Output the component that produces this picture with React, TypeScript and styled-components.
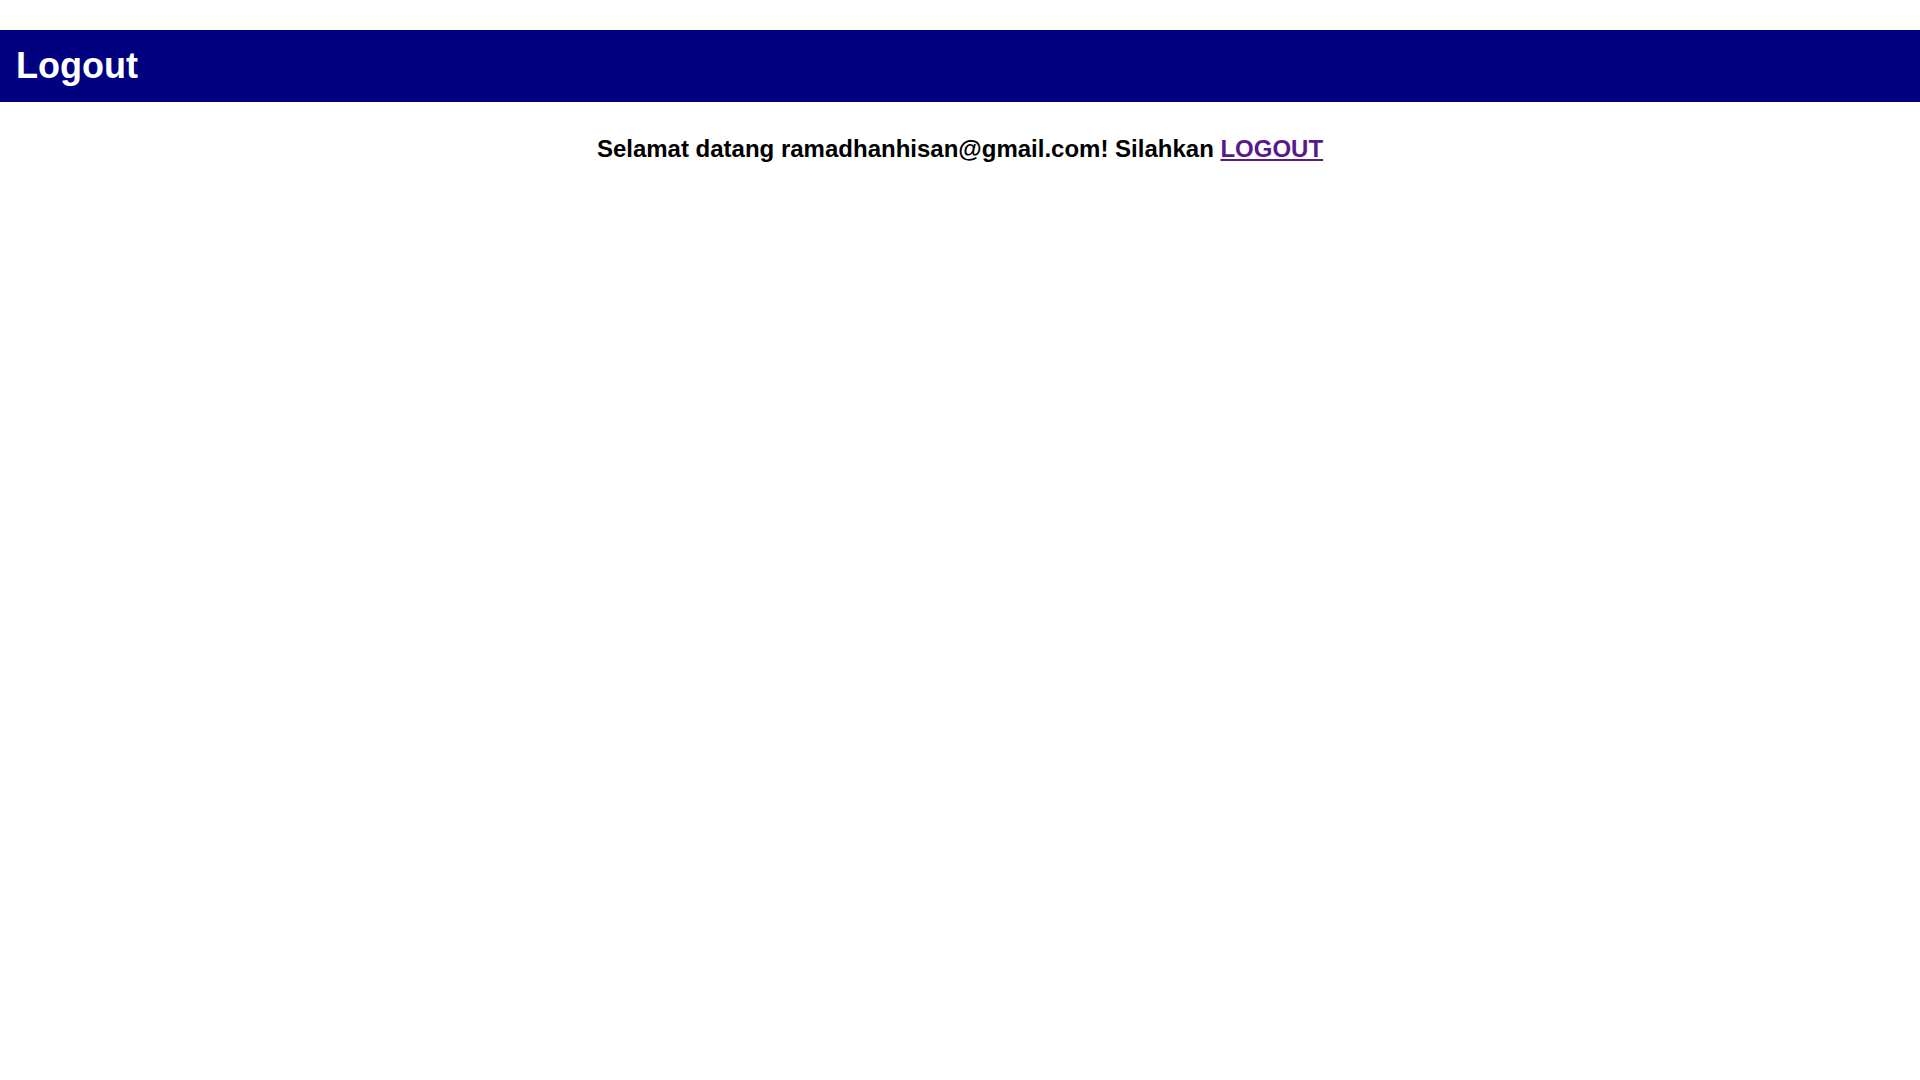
import styled, { createGlobalStyle } from "styled-components";

const GlobalStyle = createGlobalStyle`
  body {
    margin: 0;
    background: #ffffff;
    font-family: "Liberation Sans", Arial, sans-serif;
  }
`;

const Header = styled.header`
  margin-top: 30px;
  height: 72px;
  background-color: #000080;
  display: flex;
  align-items: center;
  padding: 0 16px;
`;

const Title = styled.h1`
  margin: 0;
  color: #ffffff;
  font-size: 36px;
  font-weight: 700;
`;

const Welcome = styled.p`
  margin: 33px 0 0;
  text-align: center;
  font-size: 24px;
  font-weight: 700;
  color: #000000;

  a {
    color: #551a8b;
    text-decoration: underline;
  }
`;

function App() {
  return (
    <>
      <GlobalStyle />
      <Header>
        <Title>Logout</Title>
      </Header>
      <Welcome>
        Selamat datang ramadhanhisan@gmail.com! Silahkan <a href="#">LOGOUT</a>
      </Welcome>
    </>
  );
}

export default App;
